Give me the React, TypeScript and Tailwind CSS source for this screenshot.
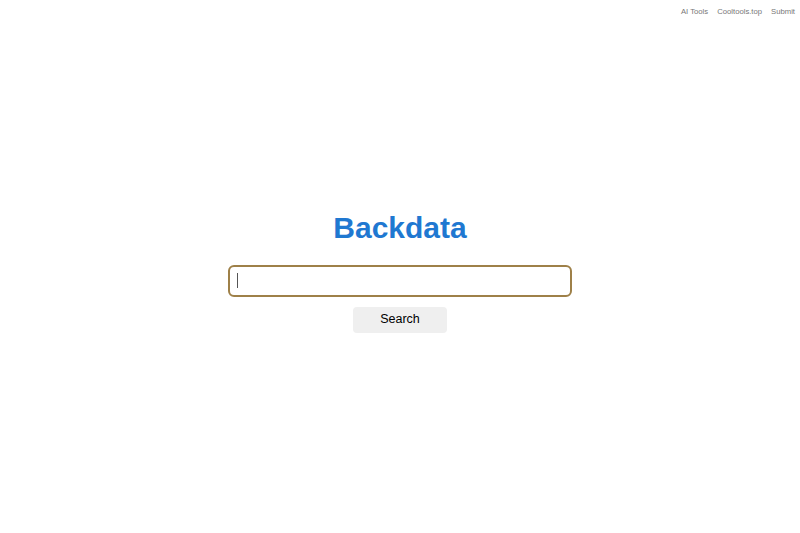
import React from "react";

export default function App() {
  return (
    <div className="min-h-screen bg-white" style={{ fontFamily: '"Liberation Sans", Arial, sans-serif' }}>
      <header className="flex justify-end gap-[9px] pr-[5px] pt-[6px] text-[7.7px] text-[#777777]">
        <a href="#">AI Tools</a>
        <a href="#">Cooltools.top</a>
        <a href="#">Submit</a>
      </header>
      <main className="flex flex-col items-center pt-[195px]">
        <h1 className="text-[30px] font-bold leading-none text-[#1f78d1]">Backdata</h1>
        <div className="relative mt-[22px]">
          <input
            autoFocus
            className="h-[32px] w-[344px] rounded-[6px] border-2 border-[#9e8048] px-2 outline-none"
          />
          <span className="pointer-events-none absolute left-[9px] top-[8px] h-[15px] w-px bg-[#555]" />
        </div>
        <button className="mt-[10px] h-[26px] w-[94px] rounded-[4px] bg-[#efefef] text-[12.5px] text-black">
          Search
        </button>
      </main>
    </div>
  );
}
